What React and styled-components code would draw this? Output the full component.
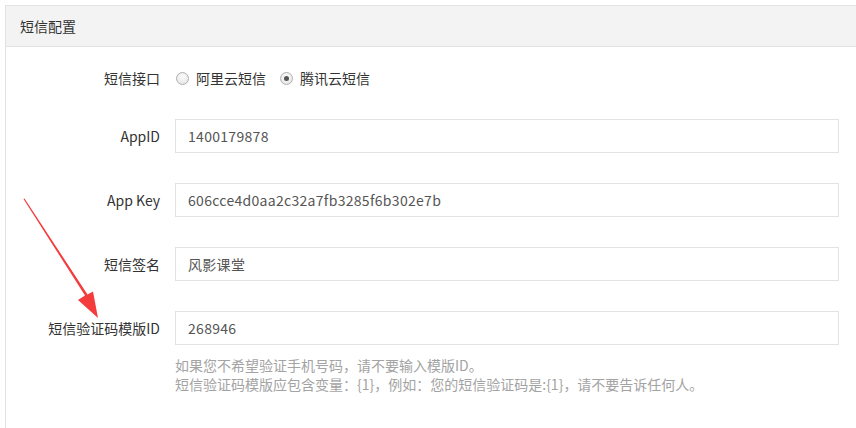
import styled, { createGlobalStyle } from "styled-components";

const GlobalStyle = createGlobalStyle`
  html, body {
    margin: 0;
    padding: 0;
    background: #fff;
  }
  body {
    font-family: "Microsoft YaHei", "Noto Sans CJK SC", "Noto Sans", sans-serif;
    font-size: 14px;
    color: #333;
  }
`;

const Page = styled.div`
  position: relative;
  width: 856px;
  height: 428px;
  overflow: hidden;
  padding: 5px 0 0 5px;
  box-sizing: border-box;
`;

const Panel = styled.div`
  width: 900px;
  height: 440px;
  border: 1px solid #e2e2e2;
  border-right: none;
  box-sizing: border-box;
`;

const PanelHeader = styled.div`
  height: 41px;
  background: #f3f3f3;
  border-bottom: 1px solid #e2e2e2;
  box-sizing: border-box;
  padding-left: 14px;
  display: flex;
  align-items: center;
  font-size: 14px;
  color: #333;
`;

const PanelBody = styled.div`
  padding-top: 14px;
`;

const Row = styled.div`
  display: flex;
  align-items: ${(p) => (p.$top ? "flex-start" : "center")};
  min-height: 34px;
  margin-bottom: ${(p) => p.$gap || 30}px;
`;

const Label = styled.label`
  width: 169px;
  flex-shrink: 0;
  text-align: right;
  padding-right: 15px;
  box-sizing: border-box;
  color: #333;
  font-size: 14px;
  line-height: 34px;
`;

const Field = styled.div`
  display: flex;
  flex-direction: column;
`;

const Input = styled.input`
  width: 664px;
  height: 34px;
  border: 1px solid #e3e3e3;
  box-sizing: border-box;
  padding: 0 12px;
  font-family: inherit;
  font-size: 14px;
  letter-spacing: 0.3px;
  color: #555;
  outline: none;
  background: #fff;
`;

const Radios = styled.div`
  display: flex;
  align-items: center;
  gap: 14px;
  padding-left: 1px;
`;

const RadioItem = styled.span`
  display: flex;
  align-items: center;
  gap: 7px;
  color: #333;
`;

const Dot = styled.span`
  width: 13px;
  height: 13px;
  border-radius: 50%;
  border: 1px solid #b0b0b0;
  box-sizing: border-box;
  background: radial-gradient(circle at 50% 35%, #fbfbfb 0%, #e2e2e2 100%);
  display: inline-flex;
  align-items: center;
  justify-content: center;

  &::after {
    content: "";
    width: 5px;
    height: 5px;
    border-radius: 50%;
    background: ${(p) => (p.$checked ? "#555" : "transparent")};
  }
`;

const Help = styled.div`
  margin-top: 11px;
  color: #a3a3a3;
  font-size: 14px;
  line-height: 19px;
`;

const Arrow = styled.svg`
  position: absolute;
  left: 0;
  top: 0;
  pointer-events: none;
`;

export default function App() {
  return (
    <>
      <GlobalStyle />
      <Page>
        <Panel>
          <PanelHeader>短信配置</PanelHeader>
          <PanelBody>
            <Row $gap={24}>
              <Label>短信接口</Label>
              <Radios>
                <RadioItem>
                  <Dot />
                  阿里云短信
                </RadioItem>
                <RadioItem>
                  <Dot $checked />
                  腾讯云短信
                </RadioItem>
              </Radios>
            </Row>
            <Row>
              <Label>AppID</Label>
              <Input defaultValue="1400179878" />
            </Row>
            <Row>
              <Label>App Key</Label>
              <Input defaultValue="606cce4d0aa2c32a7fb3285f6b302e7b" />
            </Row>
            <Row>
              <Label>短信签名</Label>
              <Input defaultValue="风影课堂" />
            </Row>
            <Row $top>
              <Label>短信验证码模版ID</Label>
              <Field>
                <Input defaultValue="268946" />
                <Help>
                  如果您不希望验证手机号码，请不要输入模版ID。
                  <br />
                  短信验证码模版应包含变量：{"{1}"}，例如：您的短信验证码是:{"{1}"}，请不要告诉任何人。
                </Help>
              </Field>
            </Row>
          </PanelBody>
        </Panel>
        <Arrow width="856" height="428" viewBox="0 0 856 428">
          <polygon
            points="23.5,199 85,295.5 78,300 98,318 93,291.5 87.5,294.5 24.5,198.5"
            fill="#f43c3c"
          />
        </Arrow>
      </Page>
    </>
  );
}
